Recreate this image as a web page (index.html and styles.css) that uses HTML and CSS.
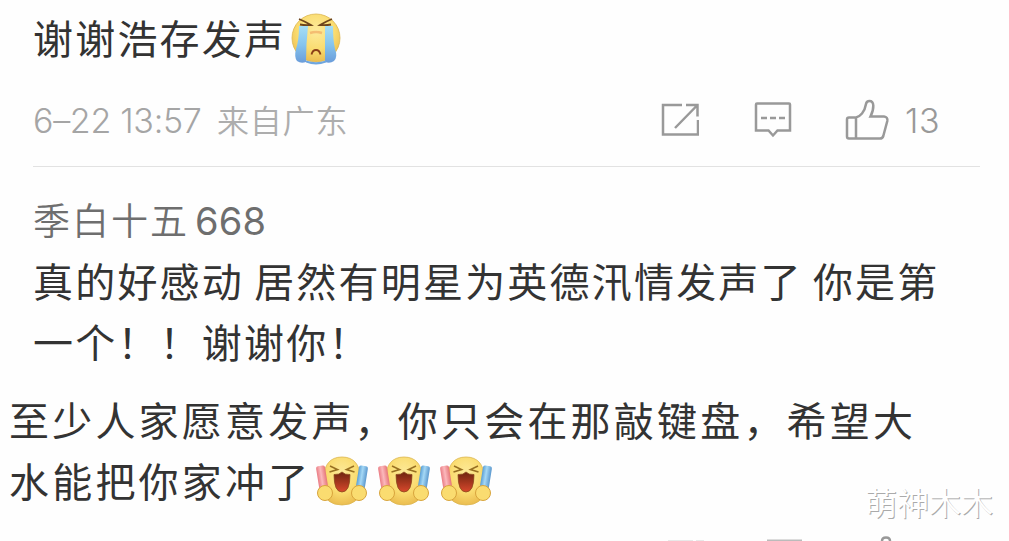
FILE: index.html
```html
<!DOCTYPE html>
<html lang="zh-CN">
<head>
    <meta charset="UTF-8">
    <meta name="viewport" content="width=device-width, initial-scale=1.0">
    <title>评论</title>
    <link rel="stylesheet" href="styles.css">
</head>
<body>
    <svg class="defs" width="0" height="0">
        <defs>
            <radialGradient id="face" cx="50%" cy="35%" r="65%">
                <stop offset="0" stop-color="#fdeb9c"/>
                <stop offset="0.6" stop-color="#fadc70"/>
                <stop offset="1" stop-color="#ebbd50"/>
            </radialGradient>
            <linearGradient id="tear" x1="0" y1="0" x2="0" y2="1">
                <stop offset="0" stop-color="#a5def5"/>
                <stop offset="0.5" stop-color="#86c5ee"/>
                <stop offset="1" stop-color="#6a9cda"/>
            </linearGradient>
            <linearGradient id="red" x1="0" y1="0" x2="1" y2="0">
                <stop offset="0" stop-color="#ea7c84"/>
                <stop offset="0.45" stop-color="#fbb8bc"/>
                <stop offset="1" stop-color="#e67678"/>
            </linearGradient>
            <linearGradient id="blue" x1="0" y1="0" x2="1" y2="0">
                <stop offset="0" stop-color="#5a9fd6"/>
                <stop offset="0.45" stop-color="#a5d8f5"/>
                <stop offset="1" stop-color="#5b98ce"/>
            </linearGradient>
            <linearGradient id="mouth" x1="0" y1="0" x2="0" y2="1">
                <stop offset="0" stop-color="#6e2410"/>
                <stop offset="1" stop-color="#d8482c"/>
            </linearGradient>
            <symbol id="cheer" viewBox="0 0 56 52">
                <path d="M28 2C40 2 46 10 46 22q0 5 1 12-2 16-19 16T9 34q1-7 1-12C10 10 16 2 28 2z" fill="url(#face)" stroke="#dcb650" stroke-width="0.8"/>
                <rect x="3.500" y="11" width="9" height="24" rx="2" fill="url(#red)" transform="rotate(-9 7 22)"/>
                <rect x="43.500" y="11" width="9" height="24" rx="2" fill="url(#blue)" transform="rotate(9 49 22)"/>
                <path d="M16 11l7.500 3.500-8 2.500M40 11l-7.500 3.500 8 2.500" fill="none" stroke="#987022" stroke-width="1.600"/>
                <path d="M20 19.500q5 .5 8-2.500 3 3 8 2.500 0 17.500-8 17.500t-8-17.500z" fill="url(#mouth)" stroke="#8c4a1c" stroke-width="0.8"/>
                <circle cx="11" cy="38" r="7.500" fill="#fadc70" stroke="#d8a43c" stroke-width="1"/>
                <circle cx="45" cy="38" r="7.500" fill="#fadc70" stroke="#d8a43c" stroke-width="1"/>
            </symbol>
        </defs>
    </svg>

    <div class="comment">
        <div class="text title">谢谢浩存发声<svg class="cry" viewBox="0 0 52 54">
                <circle cx="26" cy="26" r="24" fill="url(#face)" stroke="#dcb650" stroke-width="0.8"/>
                <path d="M9 14h9q-2 18-2 36-5 2-9-1-3-4-1-12 3-9 3-23z" fill="url(#tear)"/>
                <path d="M35 14h8q0 14 2 23 3 8-1 12-4 3-9 1 0-18 0-36z" fill="url(#tear)"/>
                <path d="M16 48.500q10 3.500 20 0v2q-10 4-20 0z" fill="#6fa6df"/>
                <path d="M9 7q5 2 12 6-6 .5-11-.5M42 7q-5 2-12 6 6 .5 11-.5" fill="none" stroke="#6e451c" stroke-width="1.800"/>
                <path d="M20 21q6-2 12 0" fill="none" stroke="#efa05a" stroke-width="2.500" opacity="0.6"/>
                <path d="M21.500 42.500q1-4.500 4.500-4.500t4.500 4.500" fill="none" stroke="#8a3f18" stroke-width="1.800"/>
            </svg>
        </div>
        <div class="meta">
            <span class="date">6–22 13:57</span>
            <span class="place">来自广东</span>
            <div class="actions">
                <svg class="share" width="38" height="34" viewBox="0 0 38 34">
                    <path d="M21 2H2v29.500h35V17M25 2h11.500v11.500M36 2.500L14 25"/>
                </svg>
                <svg class="reply" width="38" height="36" viewBox="0 0 38 36">
                    <path d="M3 1.500h32q1 0 1 1v26H23.500L19 33.500l-4.500-5H2v-26q0-1 1-1z"/>
                    <path d="M7 16h6M16 16h6M25 16h6"/>
                </svg>
                <svg class="like" width="44" height="42" viewBox="0 0 44 42">
                    <path d="M11 18.500H4q-2 0-2 2v17q0 2 2 2h31q2.500 0 3.300-2.500l4-15q.7-4-3.300-4.500H25.500q3-6 2.800-11Q28 2 24.500 2 21.500 2 21 5q-1 6-4 9.500-3 3.500-6 4v21"/>
                </svg>
                <span class="count">13</span>
            </div>
        </div>
    </div>

    <div class="comment">
        <div class="user">季白十五<span class="digits">668</span></div>
        <div class="text">真的好感动 居然有明星为英德汛情发声了 你是第<br>一个！！谢谢你！</div>
    </div>

    <div class="text answer">至少人家愿意发声，你只会在那敲键盘，希望大<br>水能把你家冲了<span class="emojis"><svg><use href="#cheer"/></svg><svg><use href="#cheer"/></svg><svg><use href="#cheer"/></svg></span></div>

    <div class="next-actions">
        <svg width="240" height="5" viewBox="0 0 240 5">
            <path d="M2 4.500h25M30 4.500h8" stroke="#e8e8e8" stroke-width="1"/>
            <path d="M101 4.500h35" stroke="#bbb"/>
            <path d="M216 5q0-3.500 4-3.500t4 3.500" stroke="#999" stroke-width="2.500"/>
        </svg>
    </div>

    <div class="watermark">萌神木木</div>
</body>
</html>
```
FILE: styles.css
```css
body {
    margin: 0;
    height: 541px;
    overflow: hidden;
    position: relative;
    background-color: #fefefe;
    color: #333;
    font-family: "Noto Sans CJK SC", sans-serif;
}

.defs {
    display: block;
}

.comment {
    margin: 0 29px 0 33px;
}

.text {
    font-size: 40px;
    line-height: 61px;
    letter-spacing: 2.2px;
    word-spacing: -1px;
    white-space: nowrap;
}

.title {
    display: flex;
    align-items: center;
    height: 75px;
}

.cry {
    width: 52px;
    height: 54px;
    margin: 3px 0 0 4px;
}

.meta {
    display: flex;
    align-items: center;
    height: 91px;
    border-bottom: 1px solid #e2e2e2;
    color: #a5a5a5;
}

.date {
    width: 184px;
    font-family: Inter, sans-serif;
    font-size: 34px;
    font-weight: 300;
    letter-spacing: -0.3px;
}

.place {
    font-size: 32px;
    font-weight: 350;
    line-height: 46px;
    padding-bottom: 4px;
    letter-spacing: 0.8px;
    color: #adadad;
}

.actions {
    display: flex;
    align-items: center;
    margin-left: auto;
    width: 319px;
}

.actions svg {
    fill: none;
    stroke: #999;
    stroke-width: 2.5;
    margin-bottom: 2px;
}

.share {
    margin-right: 55px;
}

.reply {
    margin-right: 53px;
}

.like {
    margin-right: 16px;
}

.count {
    font-family: Inter, sans-serif;
    font-size: 34px;
    font-weight: 300;
    letter-spacing: 0.5px;
    color: #999;
}

.user {
    padding-top: 24px;
    height: 59px;
    line-height: 56px;
    font-size: 37px;
    font-weight: 350;
    letter-spacing: 2px;
    color: #6e6e6e;
}

.digits {
    margin-left: 6px;
    font-family: Inter, sans-serif;
    font-size: 38px;
    font-weight: 400;
    letter-spacing: 0.2px;
}

.answer {
    margin: 17px 0 0 9px;
    letter-spacing: 3.2px;
}

.emojis {
    display: inline-flex;
    gap: 6px;
    margin-left: 3px;
    vertical-align: -10px;
}

.emojis svg {
    width: 56px;
    height: 52px;
}

.next-actions {
    position: absolute;
    left: 666px;
    bottom: 0;
    height: 5px;
}

.next-actions svg {
    display: block;
    fill: none;
    stroke-width: 2;
}

.watermark {
    position: absolute;
    right: 16px;
    bottom: 15px;
    font-size: 32px;
    font-weight: 350;
    line-height: 50px;
    color: #fff;
    text-shadow: 1px 1px 0 #aaa;
}
```
